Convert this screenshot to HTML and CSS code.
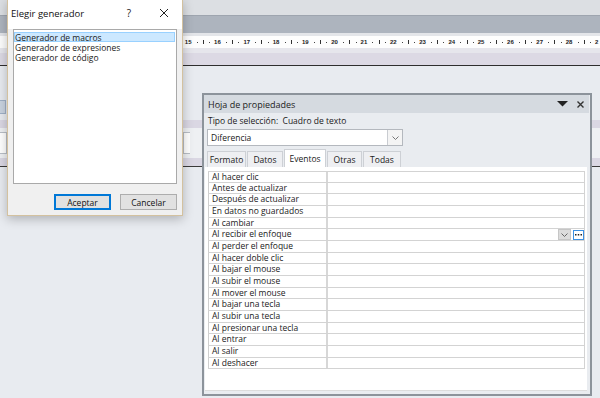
FILE: index.html
```html
<!DOCTYPE html>
<html lang="es">

<head>
    <meta charset="UTF-8">
    <title>Elegir generador</title>
    <link rel="stylesheet" href="styles.css">
</head>

<body>
    <div class="app">
        <div class="top-band"></div>
        <div class="ribbon-band"></div>
        <div class="ruler-gap"></div>
        <div class="ruler">
            <div class="unit"><span>15</span><i class="dot"></i><i class="tick"></i><i class="dot"></i></div>
            <div class="unit"><span>16</span><i class="dot"></i><i class="tick"></i><i class="dot"></i></div>
            <div class="unit"><span>17</span><i class="dot"></i><i class="tick"></i><i class="dot"></i></div>
            <div class="unit"><span>18</span><i class="dot"></i><i class="tick"></i><i class="dot"></i></div>
            <div class="unit"><span>19</span><i class="dot"></i><i class="tick"></i><i class="dot"></i></div>
            <div class="unit"><span>20</span><i class="dot"></i><i class="tick"></i><i class="dot"></i></div>
            <div class="unit"><span>21</span><i class="dot"></i><i class="tick"></i><i class="dot"></i></div>
            <div class="unit"><span>22</span><i class="dot"></i><i class="tick"></i><i class="dot"></i></div>
            <div class="unit"><span>23</span><i class="dot"></i><i class="tick"></i><i class="dot"></i></div>
            <div class="unit"><span>24</span><i class="dot"></i><i class="tick"></i><i class="dot"></i></div>
            <div class="unit"><span>25</span><i class="dot"></i><i class="tick"></i><i class="dot"></i></div>
            <div class="unit"><span>26</span><i class="dot"></i><i class="tick"></i><i class="dot"></i></div>
            <div class="unit"><span>27</span><i class="dot"></i><i class="tick"></i><i class="dot"></i></div>
            <div class="unit"><span>28</span><i class="dot"></i><i class="tick"></i><i class="dot"></i></div>
            <div class="unit"><span>2</span></div>
        </div>
        <div class="ruler-under"></div>
        <div class="section-head"></div>

        <div class="design">
            <div class="design-top">
                <div class="stub-box"></div>
            </div>
            <div class="band"></div>
            <div class="controls">
                <div class="ctl-box"></div>
                <div class="ctl-box second"></div>
            </div>
            <div class="band low"></div>
        </div>
    </div>

    <!-- dialogo flotante -->
    <div class="dialog">
        <div class="dlg-title">
            <span class="dlg-caption">Elegir generador</span>
            <span class="dlg-help">?</span>
            <svg class="dlg-close" width="10" height="10" viewBox="0 0 10 10">
                <path d="M1 1 L9 9 M9 1 L1 9" stroke="#222" stroke-width="1" fill="none" />
            </svg>
        </div>
        <div class="dlg-list">
            <div class="dlg-item selected">Generador de macros</div>
            <div class="dlg-item">Generador de expresiones</div>
            <div class="dlg-item">Generador de código</div>
        </div>
        <div class="dlg-buttons">
            <button class="btn default">Aceptar</button>
            <button class="btn">Cancelar</button>
        </div>
    </div>

    <!-- hoja de propiedades -->
    <div class="panel">
        <div class="pnl-title">
            <span class="pnl-caption">Hoja de propiedades</span>
            <svg class="pnl-menu" width="11" height="6" viewBox="0 0 11 6">
                <path d="M0 0 H11 L5.5 5.5 Z" fill="#222" />
            </svg>
            <svg class="pnl-close" width="7" height="7" viewBox="0 0 7 7">
                <path d="M0.5 0.5 L6.5 6.5 M6.5 0.5 L0.5 6.5" stroke="#333" stroke-width="1.4" fill="none" />
            </svg>
        </div>
        <div class="pnl-type">Tipo de selección:&nbsp; Cuadro de texto</div>
        <div class="combo">
            <span class="combo-text">Diferencia</span>
            <span class="combo-btn">
                <svg width="7" height="4" viewBox="0 0 7 4">
                    <path d="M0.5 0.5 L3.5 3.5 L6.5 0.5" stroke="#777" stroke-width="1" fill="none" />
                </svg>
            </span>
        </div>
        <div class="tabs">
            <div class="tab t-formato">Formato</div>
            <div class="tab t-datos">Datos</div>
            <div class="tab t-eventos active">Eventos</div>
            <div class="tab t-otras">Otras</div>
            <div class="tab t-todas">Todas</div>
        </div>
        <div class="grid-wrap">
            <div class="grid">
                <div class="row"><div class="label">Al hacer clic</div><div class="value"></div></div>
                <div class="row"><div class="label">Antes de actualizar</div><div class="value"></div></div>
                <div class="row"><div class="label">Después de actualizar</div><div class="value"></div></div>
                <div class="row"><div class="label">En datos no guardados</div><div class="value"></div></div>
                <div class="row"><div class="label">Al cambiar</div><div class="value"></div></div>
                <div class="row">
                    <div class="label">Al recibir el enfoque</div>
                    <div class="value">
                        <span class="val-drop">
                            <svg width="7" height="4" viewBox="0 0 7 4">
                                <path d="M0.5 0.5 L3.5 3.5 L6.5 0.5" stroke="#666" stroke-width="1" fill="none" />
                            </svg>
                        </span>
                        <span class="val-build">
                            <svg width="7" height="2" viewBox="0 0 7 2">
                                <rect x="0" y="0" width="1.5" height="1.5" fill="#222" />
                                <rect x="2.75" y="0" width="1.5" height="1.5" fill="#222" />
                                <rect x="5.5" y="0" width="1.5" height="1.5" fill="#222" />
                            </svg>
                        </span>
                    </div>
                </div>
                <div class="row"><div class="label">Al perder el enfoque</div><div class="value"></div></div>
                <div class="row"><div class="label">Al hacer doble clic</div><div class="value"></div></div>
                <div class="row"><div class="label">Al bajar el mouse</div><div class="value"></div></div>
                <div class="row"><div class="label">Al subir el mouse</div><div class="value"></div></div>
                <div class="row"><div class="label">Al mover el mouse</div><div class="value"></div></div>
                <div class="row"><div class="label">Al bajar una tecla</div><div class="value"></div></div>
                <div class="row"><div class="label">Al subir una tecla</div><div class="value"></div></div>
                <div class="row"><div class="label">Al presionar una tecla</div><div class="value"></div></div>
                <div class="row"><div class="label">Al entrar</div><div class="value"></div></div>
                <div class="row"><div class="label">Al salir</div><div class="value"></div></div>
                <div class="row"><div class="label">Al deshacer</div><div class="value"></div></div>
            </div>
        </div>
    </div>
</body>

</html>
```

FILE: styles.css
```css
* {
    margin: 0;
    padding: 0;
    box-sizing: border-box;
}

body {
    width: 600px;
    height: 398px;
    overflow: hidden;
    position: relative;
    background: #e8ebf0;
    font-family: "Open Sans", "Liberation Sans", sans-serif;
    font-size: 8.5px;
    color: #1a1a1a;
}

/* fondo: ventana de diseño */

.app {
    display: flex;
    flex-direction: column;
    height: 100%;
}

.top-band {
    height: 15px;
    background: #dcdfe3;
}

.ribbon-band {
    height: 18px;
    background: #adb4be;
    border-top: 1px solid #9ea5af;
}

.ruler-gap {
    height: 3px;
    background: #e3e5e9;
}

.ruler {
    height: 12px;
    background: #fdfdfd;
    display: flex;
    align-items: center;
    padding-left: 184.8px;
    font-family: "Liberation Sans", sans-serif;
    font-size: 6px;
    font-weight: bold;
    color: #222;
    white-space: nowrap;
    overflow: hidden;
}

.unit {
    flex: 0 0 29.3px;
    display: flex;
    align-items: center;
    justify-content: space-between;
    padding-right: 4px;
}

.dot {
    width: 1px;
    height: 1px;
    background: #444;
}

.tick {
    width: 1px;
    height: 4px;
    background: #333;
}

.ruler-under {
    height: 5px;
    background: #e6e6ec;
}

.section-head {
    height: 13px;
    background: #dcd9e4;
    border-bottom: 1px solid #2e2e2e;
}

.design {
    flex: 1;
    display: flex;
    flex-direction: column;
}

.design-top {
    height: 54px;
    display: flex;
    align-items: flex-end;
    padding-bottom: 6px;
}

.stub-box {
    width: 6px;
    height: 14px;
    border: 1px solid #9fb0c6;
    border-left: none;
    background: #c9d3e0;
}

.band {
    height: 8px;
    background: #dad7e3;
}

.band.low {
    height: 9px;
    border-bottom: 1px solid #3a3a3a;
}

.controls {
    height: 30px;
    display: flex;
    align-items: center;
    gap: 176px;
    background: #eef0f3;
}

.ctl-box {
    width: 7px;
    height: 22px;
    background: #fff;
    border: 1px solid #b9bec6;
    border-left: none;
}

.ctl-box.second {
    border-left: 1px solid #b9bec6;
    border-right: none;
}

/* dialogo Elegir generador */

.dialog {
    position: absolute;
    left: 7px;
    top: -1px;
    width: 176px;
    height: 217px;
    background: #f0f0f0;
    border: 1px solid #d3c19f;
    box-shadow: 0 3px 10px rgba(0, 0, 0, 0.25);
}

.dlg-title {
    height: 29px;
    background: #fff;
    display: flex;
    align-items: center;
    padding: 0 0 3px 3px;
}

.dlg-caption {
    font-size: 9.5px;
    color: #111;
    flex: 1;
}

.dlg-help {
    font-size: 10px;
    margin-right: 28px;
}

.dlg-close {
    margin-right: 13px;
}

.dlg-list {
    margin: 0 5px;
    height: 155px;
    background: #fff;
    border: 1px solid #a9a9a9;
    padding: 2px 1px 0 0;
}

.dlg-item {
    height: 10px;
    line-height: 9px;
    border: 1px solid transparent;
}

.dlg-item.selected {
    background: #cce8ff;
    border-color: #99d1ff;
}

.dlg-buttons {
    display: flex;
    justify-content: flex-end;
    gap: 9px;
    padding: 10px 5px 0 0;
}

.btn {
    width: 57px;
    height: 16px;
    font-family: "Open Sans", "Liberation Sans", sans-serif;
    font-size: 8.5px;
    color: #111;
    background: #e1e1e1;
    border: 1px solid #adadad;
}

.btn.default {
    border: 2px solid #0078d7;
}

/* hoja de propiedades */

.panel {
    position: absolute;
    left: 202px;
    top: 93px;
    width: 390px;
    height: 303px;
    background: #e9ecf0;
    border: 2px solid #8c939b;
    display: flex;
    flex-direction: column;
}

.pnl-title {
    height: 18px;
    flex: 0 0 18px;
    background: #d5dae0;
    display: flex;
    align-items: center;
    padding-left: 4px;
    margin-right: 1px;
}

.pnl-caption {
    flex: 1;
    font-size: 9px;
    color: #222;
}

.pnl-menu {
    margin-right: 9px;
}

.pnl-close {
    margin-right: 5px;
}

.pnl-type {
    height: 16px;
    line-height: 15px;
    padding-left: 4px;
}

.combo {
    margin-left: 3px;
    width: 196px;
    height: 17px;
    background: #fff;
    border: 1px solid #b4b8be;
    display: flex;
    align-items: center;
}

.combo-text {
    flex: 1;
    padding-left: 3px;
}

.combo-btn {
    width: 15px;
    height: 15px;
    border-left: 1px solid #c9ccd1;
    background: #f4f4f4;
    display: flex;
    align-items: center;
    justify-content: center;
}

.tabs {
    display: flex;
    align-items: flex-end;
    gap: 1px;
    margin: 2px 0 0 3px;
    height: 19px;
}

.tab {
    height: 16px;
    line-height: 15px;
    text-align: center;
    background: #eeeff2;
    border: 1px solid #cdd0d5;
    border-bottom: none;
}

.tab.active {
    height: 18px;
    line-height: 17px;
    background: #fff;
}

.t-formato { width: 39px; }
.t-datos { width: 36px; }
.t-eventos { width: 42px; }
.t-otras { width: 35px; }
.t-todas { width: 38px; }

.grid-wrap {
    flex: 1;
    margin: 0 3px 3px 1px;
    background: #fff;
    padding: 4px 2px 0 3px;
    border-bottom: 1px solid #dcdcdc;
}

.row {
    display: flex;
    height: 11.67px;
    border-bottom: 1px solid #d3d3d3;
}

.row:first-child {
    border-top: 1px solid #d3d3d3;
}

.label {
    width: 120px;
    line-height: 10px;
    padding-left: 3px;
    border-left: 1px solid #cfcfcf;
    border-right: 2px solid #d7d7d7;
    white-space: nowrap;
}

.value {
    flex: 1;
    display: flex;
    justify-content: flex-end;
    align-items: center;
    gap: 2px;
    border-right: 1px solid #d3d3d3;
}

.val-drop {
    width: 13px;
    height: 11px;
    background: #dcdcdc;
    border: 1px solid #c6c6c6;
    display: flex;
    align-items: flex-end;
    justify-content: center;
    padding-bottom: 2px;
}

.val-build {
    width: 11px;
    height: 10px;
    background: #fff;
    border: 1px solid #3b8fe2;
    display: flex;
    align-items: center;
    justify-content: center;
}
```
